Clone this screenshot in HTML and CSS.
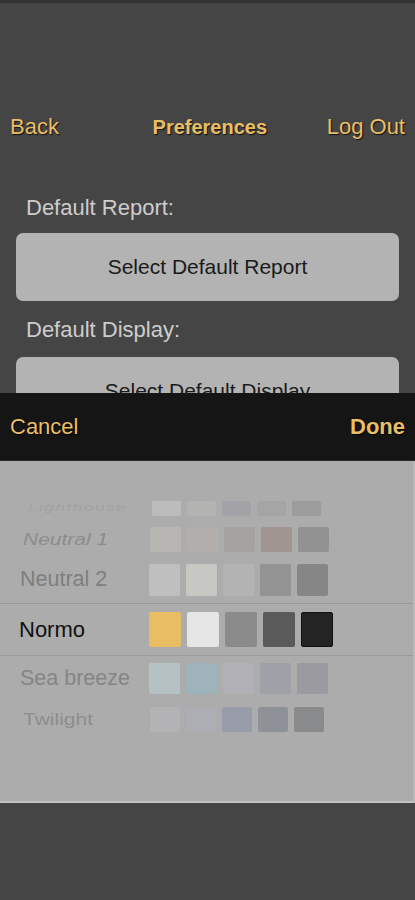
FILE: index.html
```html
<!DOCTYPE html>
<html lang="en">
<head>
    <meta charset="UTF-8">
    <meta name="viewport" content="width=device-width, initial-scale=1.0">
    <title>Preferences</title>
    <link rel="stylesheet" href="styles.css">
</head>
<body>

<div class="screen">
    <div class="navbar">
        <a href="#back">Back</a>
        <span class="title">Preferences</span>
        <a href="#logout">Log Out</a>
    </div>

    <!-- Preference fields -->
    <div class="prefs">
        <p class="field-label">Default Report:</p>
        <button class="select-btn">Select Default Report</button>
        <p class="field-label">Default Display:</p>
        <button class="select-btn">Select Default Display</button>
    </div>

    <!-- Theme picker sheet -->
    <div class="sheet">
        <div class="toolbar">
            <a href="#cancel">Cancel</a>
            <a href="#done" class="done">Done</a>
        </div>
        <div class="picker">
            <div class="row row-lighthouse">
                <span class="label">Lighthouse</span>
                <div class="swatches">
                    <span class="swatch" style="background:#bcbcbc"></span>
                    <span class="swatch" style="background:#b3b3b1"></span>
                    <span class="swatch" style="background:#a3a3a7"></span>
                    <span class="swatch" style="background:#a5a5a5"></span>
                    <span class="swatch" style="background:#9c9c9c"></span>
                </div>
            </div>
            <div class="row row-neutral1">
                <span class="label">Neutral 1</span>
                <div class="swatches">
                    <span class="swatch" style="background:#b7b6b2"></span>
                    <span class="swatch" style="background:#b1aeab"></span>
                    <span class="swatch" style="background:#a6a2a1"></span>
                    <span class="swatch" style="background:#a09591"></span>
                    <span class="swatch" style="background:#929292"></span>
                </div>
            </div>
            <div class="row row-neutral2">
                <span class="label">Neutral 2</span>
                <div class="swatches">
                    <span class="swatch" style="background:#bfbfbf"></span>
                    <span class="swatch" style="background:#c7c7c4"></span>
                    <span class="swatch" style="background:#b3b3b3"></span>
                    <span class="swatch" style="background:#939393"></span>
                    <span class="swatch" style="background:#868686"></span>
                </div>
            </div>
            <div class="row row-selected">
                <span class="label">Normo</span>
                <div class="swatches">
                    <span class="swatch" style="background:#e8bd63"></span>
                    <span class="swatch" style="background:#e6e6e6"></span>
                    <span class="swatch" style="background:#8b8b8b"></span>
                    <span class="swatch" style="background:#5a5a5a"></span>
                    <span class="swatch swatch-dark" style="background:#242424"></span>
                </div>
            </div>
            <div class="row row-seabreeze">
                <span class="label">Sea breeze</span>
                <div class="swatches">
                    <span class="swatch" style="background:#b6c1c3"></span>
                    <span class="swatch" style="background:#9fb3bb"></span>
                    <span class="swatch" style="background:#b0b0b6"></span>
                    <span class="swatch" style="background:#9ea1a6"></span>
                    <span class="swatch" style="background:#9a9aa0"></span>
                </div>
            </div>
            <div class="row row-twilight">
                <span class="label">Twilight</span>
                <div class="swatches">
                    <span class="swatch" style="background:#b3b3b5"></span>
                    <span class="swatch" style="background:#adaeb3"></span>
                    <span class="swatch" style="background:#979ca8"></span>
                    <span class="swatch" style="background:#8f9198"></span>
                    <span class="swatch" style="background:#898a8c"></span>
                </div>
            </div>
        </div>
    </div>
</div>

</body>
</html>
```

FILE: styles.css
```css
body {
    margin: 0;
    background-color: #454545;
    font-family: "Liberation Sans", Arial, sans-serif;
}

.screen {
    position: relative;
    height: 900px;
    overflow: hidden;
    border-top: 3px solid #333;
    box-sizing: border-box;
}

.navbar {
    display: flex;
    justify-content: space-between;
    align-items: center;
    height: 54px;
    padding: 97px 10px 0;
}

.navbar a, .navbar .title {
    color: #e9bf66;
    text-decoration: none;
    font-size: 22px;
    text-shadow: 1px 1px 1px #111;
}

.navbar .title {
    font-weight: bold;
    font-size: 20px;
    margin-left: 34px;
}

.prefs {
    padding: 0 16px;
}

.field-label {
    margin: 42px 0 0 10px;
    line-height: 24px;
    font-size: 22px;
    color: #cdcdcd;
}

.field-label + .select-btn {
    margin-top: 13px;
}

.select-btn + .field-label {
    margin-top: 17px;
}

.select-btn:last-child {
    margin-top: 15px;
}

.select-btn {
    display: block;
    width: 100%;
    height: 68px;
    border: none;
    border-radius: 7px;
    background: #b3b3b3;
    font-family: inherit;
    font-size: 21px;
    color: #1a1a1a;
}

/* Picker sheet over the form */
.sheet {
    position: absolute;
    top: 390px;
    left: 0;
    right: 0;
}

.toolbar {
    display: flex;
    justify-content: space-between;
    align-items: center;
    height: 67px;
    padding: 0 10px;
    background: #151515;
    border-bottom: 1px solid #2a2a2a;
}

.toolbar a {
    color: #e9bf66;
    text-decoration: none;
    font-size: 22px;
    text-shadow: 1px 1px 1px #000;
}

.toolbar .done {
    font-weight: bold;
}

.picker {
    background: #acacac;
    height: 342px;
    padding-top: 33px;
    box-sizing: border-box;
    border-right: 2px solid #b8b8b8;
    border-bottom: 2px solid #c2c2c2;
}

.row {
    display: flex;
    align-items: center;
}

.label {
    width: 149px;
    box-sizing: border-box;
    color: #858585;
    white-space: nowrap;
}

.swatches {
    display: flex;
    gap: 6px;
}

.swatch {
    display: block;
    width: 31px;
    height: 31px;
    border-radius: 2px;
}

.row-lighthouse {
    height: 28px;
}

.row-lighthouse .label {
    padding-left: 28px;
    font-size: 17px;
    font-style: italic;
    letter-spacing: 1.6px;
    color: #a2a2a2;
    transform: scaleY(0.65);
    transform-origin: left center;
}

.row-lighthouse .swatches {
    padding-left: 3px;
}

.row-lighthouse .swatch {
    width: 29px;
    height: 15px;
}

.row-neutral1 {
    height: 34px;
}

.row-neutral1 .label {
    padding-left: 23px;
    font-size: 21px;
    font-style: italic;
    color: #8c8c8c;
    transform: scaleY(0.8);
}

.row-neutral1 .swatches {
    padding-left: 1px;
}

.row-neutral1 .swatch {
    height: 25px;
}

.row-neutral2 {
    height: 47px;
}

.row-neutral2 .label {
    padding-left: 20px;
    font-size: 21.5px;
    color: #7e7e7e;
}

.row-neutral2 .swatch {
    height: 32px;
}

.row-selected {
    height: 51px;
    border-top: 1px solid #999;
    border-bottom: 1px solid #999;
}

.row-selected .label {
    padding-left: 19px;
    font-size: 22px;
    color: #111;
}

.row-selected .swatch {
    width: 32px;
    height: 35px;
}

.swatch-dark {
    box-sizing: border-box;
    border: 1px solid #111;
}

.row-seabreeze {
    height: 44px;
}

.row-seabreeze .label {
    padding-left: 20px;
    font-size: 21.5px;
    color: #858585;
}

.row-seabreeze .swatch {
    height: 31px;
}

.row-twilight {
    height: 38px;
}

.row-twilight .label {
    padding-left: 23px;
    font-size: 21px;
    color: #8d8d8d;
    transform: scaleY(0.8);
}

.row-twilight .swatches {
    padding-left: 1px;
}

.row-twilight .swatch {
    width: 30px;
    height: 25px;
}
```
